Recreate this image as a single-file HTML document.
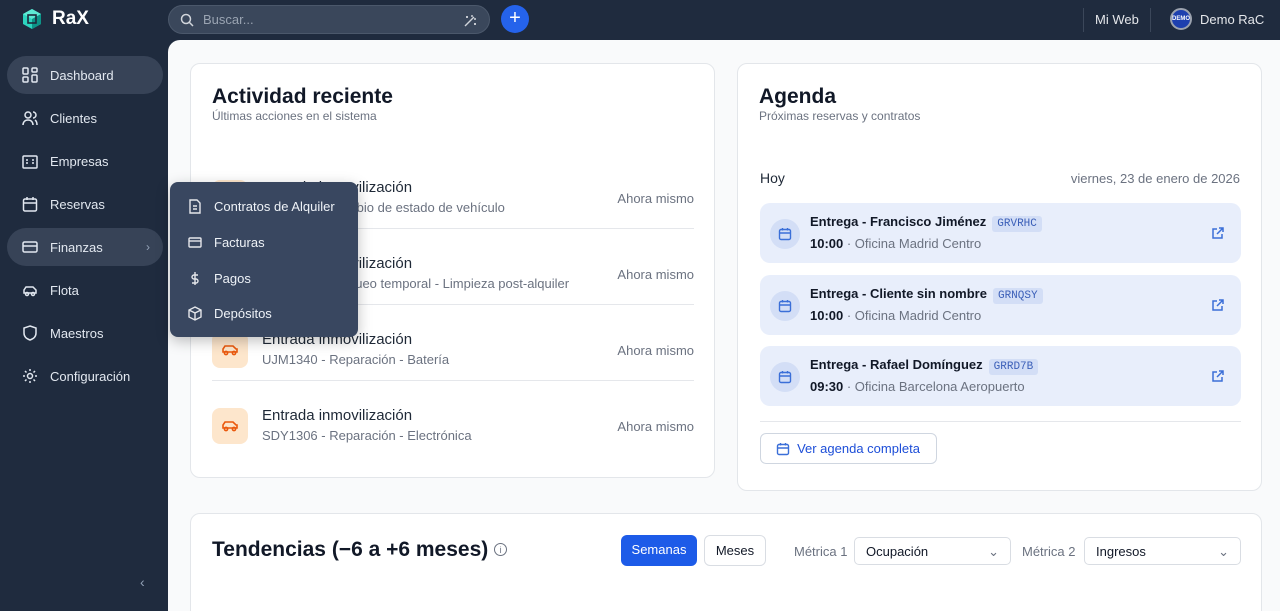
<!DOCTYPE html>
<html style="overflow:hidden;height:611px"><head><meta charset="utf-8"><style>
*{box-sizing:border-box;margin:0;padding:0}
body{width:1280px;height:611px;overflow:hidden;background:#1f2b3e;font-family:"Liberation Sans",sans-serif;position:relative}
.top{position:absolute;left:0;top:0;width:1280px;height:40px}
.logo{position:absolute;left:21px;top:8px;display:flex;align-items:center;gap:9px;color:#fff;font-weight:bold;font-size:19px}
.search{position:absolute;left:168px;top:5px;width:322px;height:29px;border-radius:15px;background:#3a475b;border:1px solid #4b586b;color:#9aa4b2;font-size:13px;padding:6px 0 0 34px}
.plus{position:absolute;left:501px;top:5px;width:28px;height:28px;border-radius:50%;background:#2563eb;color:#fff;text-align:center;font-size:20px;line-height:27px}
.tr{position:absolute;top:12px;color:#e5e7eb;font-size:13px}
.vsep{position:absolute;top:8px;width:1px;height:24px;background:#3b475a}
.side a{position:absolute;left:7px;width:156px;height:38px;border-radius:19px;color:#e2e8f0;font-size:13px;display:flex;align-items:center;padding-left:43px}
.side a.act{background:#374357}
.side svg{position:absolute;left:15px;top:11px}
.main{position:absolute;left:168px;top:40px;width:1112px;height:571px;background:#f9fafb;border-top-left-radius:12px;overflow:hidden}
.card{position:absolute;background:#fff;border:1px solid #e3e6ea;border-radius:10px}
h2{font-size:21px;font-weight:bold;color:#111827}
.sub{font-size:12px;color:#6b7280}
.row{position:absolute;left:21px;width:482px;height:76px}
.ic{position:absolute;left:0;top:20px;width:36px;height:36px;border-radius:8px;background:#fde6cc}
.rt{position:absolute;left:50px;top:19px;font-size:15px;color:#1f2937}
.rs{position:absolute;left:50px;top:40px;font-size:13px;color:#6b7280}
.rr{position:absolute;right:0;top:31px;font-size:13px;color:#6b7280}
.hr{position:absolute;left:21px;width:482px;height:1px;background:#e5e7eb}
.ag{position:absolute;left:22px;width:481px;height:60px;border-radius:10px;background:#e8eefb}
.ag .ci{position:absolute;left:10px;top:16px;width:30px;height:30px;border-radius:50%;background:#d3def6}
.ag .t{position:absolute;left:50px;top:11px;font-size:13px;font-weight:bold;color:#111827}
.ag .s{position:absolute;left:50px;top:33px;font-size:13px;color:#6b7280}
.ag .s b{color:#111827}
.tag{display:inline-block;margin-left:6px;background:#d3def6;color:#3b5fb8;font-family:"Liberation Mono",monospace;font-size:11px;font-weight:normal;padding:2px 5px;border-radius:3px}
.ag svg.ext{position:absolute;right:16px;top:23px}
.menu{position:absolute;left:170px;top:182px;width:188px;height:155px;border-radius:8px;background:#394760;box-shadow:0 4px 14px rgba(0,0,0,.25)}
.menu div{position:absolute;left:44px;font-size:13px;color:#eef2f7}
.menu svg{position:absolute;left:-26px;top:0}
.btn{position:absolute;height:31px;border-radius:6px;font-size:13px;line-height:29px;text-align:center}
.sel{position:absolute;height:28px;border:1px solid #d9dde3;border-radius:5px;font-size:13px;color:#111827;padding:6px 11px;background:#fff}
</style></head><body>
<div class="top">
 <div class="logo"><svg width="22" height="22" viewBox="0 0 22 22"><path d="M11 1l9 5v10l-9 5-9-5V6z" fill="#2dd4bf"/><path d="M11 1l9 5-9 5-9-5z" fill="#5eead4"/><path d="M11 11v10l9-5V6z" fill="#0d9488"/><rect x="7" y="7" width="8" height="8" fill="none" stroke="#1e293b" stroke-width="1.6"/></svg>RaX</div>
 <div class="search">Buscar...<svg style="position:absolute;left:11px;top:7px" width="14" height="14" viewBox="0 0 14 14" fill="none" stroke="#d1d5db" stroke-width="1.5"><circle cx="6" cy="6" r="4.5"/><path d="M9.5 9.5L13 13"/></svg><svg style="position:absolute;right:11px;top:7px" width="15" height="15" viewBox="0 0 15 15" fill="none" stroke="#d1d5db" stroke-width="1.4"><path d="M2 13L11 4M9 2v2M13 6h-2M4 3v2M3 4h2M12 10v2M11 11h2"/></svg></div>
 <div class="plus">+</div>
 <div class="vsep" style="left:1083px"></div><div class="tr" style="left:1095px">Mi Web</div>
 <div class="vsep" style="left:1150px"></div>
 <div style="position:absolute;left:1170px;top:8px;width:22px;height:22px;border-radius:50%;background:#1e40af;border:2px solid #9ca3af;color:#fff;font-size:6px;font-weight:bold;text-align:center;line-height:18px">DEMO</div>
 <div class="tr" style="left:1200px">Demo RaC</div>
</div>
<div class="side">
 <a class="act" style="top:56px"><svg width="16" height="16" viewBox="0 0 16 16" fill="none" stroke="#e2e8f0" stroke-width="1.5"><rect x="1" y="1" width="5" height="6" rx="1"/><rect x="10" y="1" width="5" height="4" rx="1"/><rect x="1" y="10" width="5" height="5" rx="1"/><rect x="10" y="8" width="5" height="7" rx="1"/></svg>Dashboard</a>
 <a style="top:99px"><svg width="16" height="16" viewBox="0 0 16 16" fill="none" stroke="#e2e8f0" stroke-width="1.5"><circle cx="6" cy="5" r="3"/><path d="M1 15c0-3 2-5 5-5s5 2 5 5M11 2a3 3 0 010 6M13 10c1.5 1 2 3 2 5"/></svg>Clientes</a>
 <a style="top:142px"><svg width="16" height="16" viewBox="0 0 16 16" fill="none" stroke="#e2e8f0" stroke-width="1.5"><rect x="1" y="3" width="14" height="12" rx="1"/><path d="M4 7h2M4 10h2M10 7h2M10 10h2"/></svg>Empresas</a>
 <a style="top:185px"><svg width="16" height="16" viewBox="0 0 16 16" fill="none" stroke="#e2e8f0" stroke-width="1.5"><rect x="1.5" y="3" width="13" height="12" rx="1.5"/><path d="M1.5 7h13M5 1v3M11 1v3"/></svg>Reservas</a>
 <a class="act" style="top:228px"><svg width="16" height="16" viewBox="0 0 16 16" fill="none" stroke="#e2e8f0" stroke-width="1.5"><rect x="1" y="3" width="14" height="10" rx="1.5"/><path d="M1 7h14"/></svg>Finanzas<span style="position:absolute;right:13px;color:#94a3b8;font-size:12px">›</span></a>
 <a style="top:271px"><svg width="16" height="16" viewBox="0 0 16 16" fill="none" stroke="#e2e8f0" stroke-width="1.5"><path d="M2 11V8l2-3h7l3 3v3z"/><circle cx="5" cy="12" r="1.5"/><circle cx="11" cy="12" r="1.5"/></svg>Flota</a>
 <a style="top:314px"><svg width="16" height="16" viewBox="0 0 16 16" fill="none" stroke="#e2e8f0" stroke-width="1.5"><path d="M8 1l6 2v5c0 4-3 6-6 7-3-1-6-3-6-7V3z"/></svg>Maestros</a>
 <a style="top:357px"><svg width="16" height="16" viewBox="0 0 16 16" fill="none" stroke="#e2e8f0" stroke-width="1.5"><circle cx="8" cy="8" r="2.5"/><path d="M8 1v2M8 13v2M1 8h2M13 8h2M3 3l1.5 1.5M11.5 11.5L13 13M3 13l1.5-1.5M11.5 4.5L13 3"/></svg>Configuración</a>
 <div style="position:absolute;left:140px;top:574px;color:#94a3b8;font-size:14px">‹</div>
</div>
<div class="main">
 <div class="card" style="left:22px;top:23px;width:525px;height:415px">
  <div style="position:absolute;left:21px;top:21px"><h2>Actividad reciente</h2><div class="sub">Últimas acciones en el sistema</div></div>
  <div class="row" style="top:96px"><div class="ic"></div><div class="rt">Entrada inmovilización</div><div class="rs">SDY1306 - Cambio de estado de vehículo</div><div class="rr">Ahora mismo</div></div>
  <div class="hr" style="top:164px"></div>
  <div class="row" style="top:172px"><div class="ic"></div><div class="rt">Entrada inmovilización</div><div class="rs">SDY1306 - Bloqueo temporal - Limpieza post-alquiler</div><div class="rr">Ahora mismo</div></div>
  <div class="hr" style="top:240px"></div>
  <div class="row" style="top:248px"><div class="ic"><svg style="margin:11px 0 0 9px" width="18" height="14" viewBox="0 0 18 14" fill="none" stroke="#ea580c" stroke-width="1.6"><path d="M2 9V6l2-3h8l3 3h1v3z"/><circle cx="5" cy="10" r="1.6"/><circle cx="13" cy="10" r="1.6"/></svg></div><div class="rt">Entrada inmovilización</div><div class="rs">UJM1340 - Reparación - Batería</div><div class="rr">Ahora mismo</div></div>
  <div class="hr" style="top:316px"></div>
  <div class="row" style="top:324px"><div class="ic"><svg style="margin:11px 0 0 9px" width="18" height="14" viewBox="0 0 18 14" fill="none" stroke="#ea580c" stroke-width="1.6"><path d="M2 9V6l2-3h8l3 3h1v3z"/><circle cx="5" cy="10" r="1.6"/><circle cx="13" cy="10" r="1.6"/></svg></div><div class="rt">Entrada inmovilización</div><div class="rs">SDY1306 - Reparación - Electrónica</div><div class="rr">Ahora mismo</div></div>
 </div>
 <div class="card" style="left:569px;top:23px;width:525px;height:428px">
  <div style="position:absolute;left:21px;top:21px"><h2>Agenda</h2><div class="sub">Próximas reservas y contratos</div></div>
  <div style="position:absolute;left:22px;top:106px;font-size:14px;color:#1f2937">Hoy</div>
  <div style="position:absolute;right:21px;top:107px;font-size:13px;color:#6b7280">viernes, 23 de enero de 2026</div>
  <div class="ag" style="top:139px"><div class="ci"><svg style="margin:8px" width="14" height="14" viewBox="0 0 14 14" fill="none" stroke="#3b6fd8" stroke-width="1.4"><rect x="1.5" y="2.5" width="11" height="10" rx="1.5"/><path d="M1.5 6h11M4.5 1v2.5M9.5 1v2.5"/></svg></div><div class="t">Entrega - Francisco Jiménez<span class="tag">GRVRHC</span></div><div class="s"><b>10:00</b> · Oficina Madrid Centro</div><svg class="ext" width="14" height="14" viewBox="0 0 14 14" fill="none" stroke="#3b6fd8" stroke-width="1.5"><path d="M11 8v4H2V3h4M8 2h4v4M12 2L6 8"/></svg></div>
  <div class="ag" style="top:211px"><div class="ci"><svg style="margin:8px" width="14" height="14" viewBox="0 0 14 14" fill="none" stroke="#3b6fd8" stroke-width="1.4"><rect x="1.5" y="2.5" width="11" height="10" rx="1.5"/><path d="M1.5 6h11M4.5 1v2.5M9.5 1v2.5"/></svg></div><div class="t">Entrega - Cliente sin nombre<span class="tag">GRNQSY</span></div><div class="s"><b>10:00</b> · Oficina Madrid Centro</div><svg class="ext" width="14" height="14" viewBox="0 0 14 14" fill="none" stroke="#3b6fd8" stroke-width="1.5"><path d="M11 8v4H2V3h4M8 2h4v4M12 2L6 8"/></svg></div>
  <div class="ag" style="top:282px"><div class="ci"><svg style="margin:8px" width="14" height="14" viewBox="0 0 14 14" fill="none" stroke="#3b6fd8" stroke-width="1.4"><rect x="1.5" y="2.5" width="11" height="10" rx="1.5"/><path d="M1.5 6h11M4.5 1v2.5M9.5 1v2.5"/></svg></div><div class="t">Entrega - Rafael Domínguez<span class="tag">GRRD7B</span></div><div class="s"><b>09:30</b> · Oficina Barcelona Aeropuerto</div><svg class="ext" width="14" height="14" viewBox="0 0 14 14" fill="none" stroke="#3b6fd8" stroke-width="1.5"><path d="M11 8v4H2V3h4M8 2h4v4M12 2L6 8"/></svg></div>
  <div class="hr" style="left:22px;top:357px;width:481px"></div>
  <div class="btn" style="left:22px;top:369px;width:177px;border:1px solid #cfd6e0;color:#1d4ed8;padding-left:20px">Ver agenda completa<svg style="position:absolute;left:15px;top:8px" width="14" height="14" viewBox="0 0 14 14" fill="none" stroke="#3b6fd8" stroke-width="1.4"><rect x="1.5" y="2.5" width="11" height="10" rx="1.5"/><path d="M1.5 6h11M4.5 1v2.5M9.5 1v2.5"/></svg></div>
 </div>
 <div class="card" style="left:22px;top:473px;width:1072px;height:110px">
  <div style="position:absolute;left:21px;top:24px;font-size:21px;font-weight:bold;color:#111827">Tendencias (−6 a +6 meses) <span style="font-weight:normal;color:#6b7280;border:1px solid #6b7280;border-radius:50%;display:inline-block;width:13px;height:13px;line-height:12px;text-align:center;vertical-align:3px;font-size:9px">i</span></div>
  <div class="btn" style="left:430px;top:21px;width:76px;background:#1d5be8;color:#fff">Semanas</div>
  <div class="btn" style="left:513px;top:21px;width:62px;border:1px solid #d9dde3;color:#111827">Meses</div>
  <div style="position:absolute;left:603px;top:30px;font-size:13px;color:#6b7280">Métrica 1</div>
  <div class="sel" style="left:663px;top:23px;width:157px">Ocupación<span style="position:absolute;right:11px;color:#6b7280">⌄</span></div>
  <div style="position:absolute;left:831px;top:30px;font-size:13px;color:#6b7280">Métrica 2</div>
  <div class="sel" style="left:893px;top:23px;width:157px">Ingresos<span style="position:absolute;right:11px;color:#6b7280">⌄</span></div>
 </div>
</div>
<div class="menu">
 <div style="top:17px"><svg width="14" height="15" viewBox="0 0 14 15" fill="none" stroke="#e5e7eb" stroke-width="1.4"><path d="M2 1h7l3 3v10H2z"/><path d="M5 7h4M5 10h4"/></svg>Contratos de Alquiler</div>
 <div style="top:53px"><svg width="14" height="15" viewBox="0 0 14 15" fill="none" stroke="#e5e7eb" stroke-width="1.4"><rect x="1" y="3" width="12" height="9" rx="1"/><path d="M1 6h12"/></svg>Facturas</div>
 <div style="top:89px"><svg width="14" height="15" viewBox="0 0 14 15" fill="none" stroke="#e5e7eb" stroke-width="1.4"><path d="M7 1v13M10 4H6a2 2 0 000 4h2a2 2 0 010 4H4"/></svg>Pagos</div>
 <div style="top:124px"><svg width="14" height="15" viewBox="0 0 14 15" fill="none" stroke="#e5e7eb" stroke-width="1.4"><path d="M7 1l6 3v7l-6 3-6-3V4zM1 4l6 3 6-3M7 7v7"/></svg>Depósitos</div>
</div>
</body></html>
